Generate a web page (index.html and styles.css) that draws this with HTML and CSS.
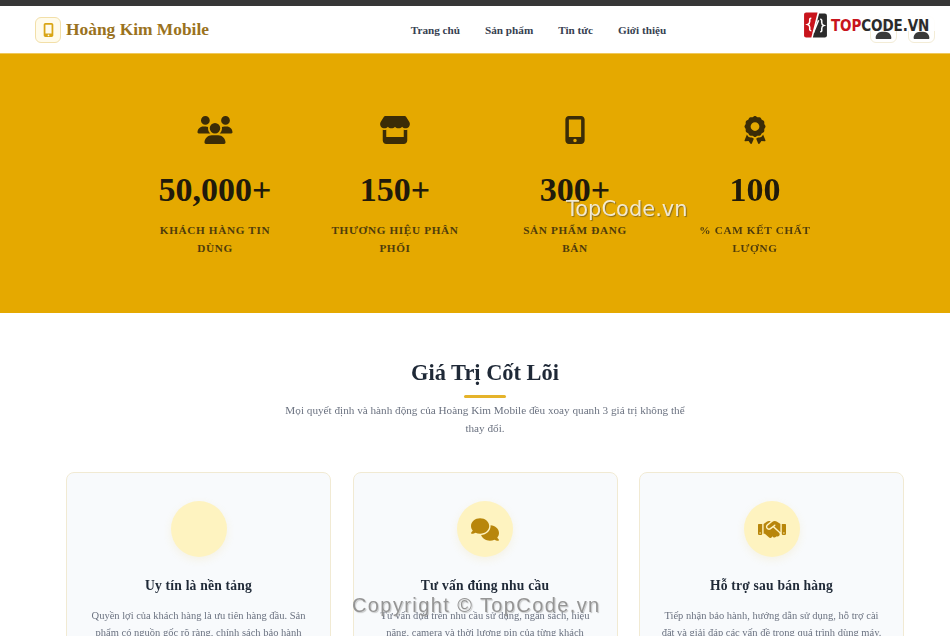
FILE: index.html
```html
<!DOCTYPE html>
<html lang="vi">
<head>
    <meta charset="UTF-8">
    <meta name="viewport" content="width=device-width, initial-scale=1.0">
    <title>Hoàng Kim Mobile</title>
    <link rel="stylesheet" href="styles.css">
</head>
<body>

<div class="page">
    <div class="top-bar"></div>

    <header class="site-header">
        <a class="brand" href="#">
            <span class="brand-icon">
                <svg viewBox="0 0 384 512"><path d="M80 0h224c35 0 64 29 64 64v384c0 35-29 64-64 64H80c-35 0-64-29-64-64V64C16 29 45 0 80 0zm0 64v320h224V64H80zm112 416a32 32 0 1 0 0-64 32 32 0 1 0 0 64z"/></svg>
            </span>
            Hoàng Kim Mobile
        </a>
        <nav class="main-nav">
            <a href="#">Trang chủ</a>
            <a href="#">Sản phẩm</a>
            <a href="#">Tin tức</a>
            <a href="#">Giới thiệu</a>
        </nav>
        <div class="header-actions">
            <button class="icon-button"><svg viewBox="0 0 448 512"><path d="M224 256a128 128 0 1 0 0-256 128 128 0 1 0 0 256zm-45 48C80 304 0 384 0 483c0 16 13 29 29 29h390c16 0 29-13 29-29 0-99-80-179-179-179h-90z"/></svg></button>
            <button class="icon-button"><svg viewBox="0 0 448 512"><path d="M224 256a128 128 0 1 0 0-256 128 128 0 1 0 0 256zm-45 48C80 304 0 384 0 483c0 16 13 29 29 29h390c16 0 29-13 29-29 0-99-80-179-179-179h-90z"/></svg></button>
        </div>
    </header>

    <section class="stats">
        <div class="stats-grid">
            <div class="stat">
                <svg class="stat-icon" viewBox="0 0 640 512"><path d="M144 0a80 80 0 1 1 0 160A80 80 0 1 1 144 0zM512 0a80 80 0 1 1 0 160A80 80 0 1 1 512 0zM0 298.7C0 239.8 47.8 192 106.7 192h42.7c15.9 0 31 3.5 44.6 9.7c-1.3 7.2-1.9 14.7-1.9 22.3c0 38.2 16.8 72.5 43.3 96c-.2 0-.4 0-.7 0H21.3C9.6 320 0 310.4 0 298.7zM405.3 320c-.2 0-.4 0-.7 0c26.6-23.5 43.3-57.8 43.3-96c0-7.6-.7-15-1.9-22.3c13.6-6.3 28.7-9.7 44.6-9.7h42.7C592.2 192 640 239.8 640 298.7c0 11.8-9.6 21.3-21.3 21.3H405.3zM224 224a96 96 0 1 1 192 0 96 96 0 1 1 -192 0zM128 485.3C128 411.7 187.7 352 261.3 352H378.7C452.3 352 512 411.7 512 485.3c0 14.7-11.9 26.7-26.7 26.7H154.7c-14.7 0-26.7-11.9-26.7-26.7z"/></svg>
                <div class="stat-number">50,000+</div>
                <div class="stat-label">Khách hàng tin dùng</div>
            </div>
            <div class="stat">
                <svg class="stat-icon" viewBox="0 0 576 512"><path d="M547.6 103.8L490.3 13.1C485.2 5 476.1 0 466.4 0H109.6C99.9 0 90.8 5 85.7 13.1L28.3 103.8c-29.6 46.8-3.4 111.9 51.9 119.4c4 .5 8.1 .8 12.1 .8c26.1 0 49.3-11.4 65.2-29c15.9 17.6 39.1 29 65.2 29c26.1 0 49.3-11.4 65.2-29c15.9 17.6 39.1 29 65.2 29c26.2 0 49.3-11.4 65.2-29c16 17.6 39.1 29 65.2 29c4.1 0 8.1-.3 12.1-.8c55.5-7.4 81.8-72.5 52.1-119.4zM499.7 254.9l-.1 0c-5.3 .7-10.7 1.1-16.2 1.1c-12.4 0-24.3-1.9-35.4-5.3V384H128V250.6c-11.2 3.5-23.2 5.4-35.6 5.4c-5.5 0-11-.4-16.3-1.1l-.1 0c-4.1-.6-8.1-1.3-12-2.3V384v64c0 35.3 28.7 64 64 64H448c35.3 0 64-28.7 64-64V384 252.6c-4 1-8 1.8-12.3 2.3z"/></svg>
                <div class="stat-number">150+</div>
                <div class="stat-label">Thương hiệu phân phối</div>
            </div>
            <div class="stat">
                <svg class="stat-icon" viewBox="0 0 384 512"><path d="M80 0h224c35 0 64 29 64 64v384c0 35-29 64-64 64H80c-35 0-64-29-64-64V64C16 29 45 0 80 0zm0 64v320h224V64H80zm112 416a32 32 0 1 0 0-64 32 32 0 1 0 0 64z"/></svg>
                <div class="stat-number">300+</div>
                <div class="stat-label">Sản phẩm đang bán</div>
            </div>
            <div class="stat">
                <svg class="stat-icon" viewBox="0 0 384 512"><path d="M173.8 5.5c11-7.3 25.4-7.3 36.4 0L228 17.2c6 3.9 13 5.8 20.1 5.4l21.3-1.3c13.2-.8 25.6 6.4 31.5 18.2l9.6 19.1c3.2 6.4 8.4 11.5 14.7 14.7L344.5 83c11.8 5.9 19 18.3 18.2 31.5l-1.3 21.3c-.4 7.1 1.5 14.2 5.4 20.1l11.8 17.8c7.3 11 7.3 25.4 0 36.4L366.8 228c-3.9 6-5.8 13-5.4 20.1l1.3 21.3c.8 13.2-6.4 25.6-18.2 31.5l-19.1 9.6c-6.4 3.2-11.5 8.4-14.7 14.7L301 344.5c-5.9 11.8-18.3 19-31.5 18.2l-21.3-1.3c-7.1-.4-14.2 1.5-20.1 5.4l-17.8 11.8c-11 7.3-25.4 7.3-36.4 0L156 366.8c-6-3.9-13-5.8-20.1-5.4l-21.3 1.3c-13.2 .8-25.6-6.4-31.5-18.2l-9.6-19.1c-3.2-6.4-8.4-11.5-14.7-14.7L39.5 301c-11.8-5.9-19-18.3-18.2-31.5l1.3-21.3c.4-7.1-1.5-14.2-5.4-20.1L5.5 210.2c-7.3-11-7.3-25.4 0-36.4L17.2 156c3.9-6 5.8-13 5.4-20.1l-1.3-21.3c-.8-13.2 6.4-25.6 18.2-31.5l19.1-9.6C65 70.2 70.2 65 73.4 58.6L83 39.5c5.9-11.8 18.3-19 31.5-18.2l21.3 1.3c7.1 .4 14.2-1.5 20.1-5.4L173.8 5.5zM272 192a80 80 0 1 0 -160 0 80 80 0 1 0 160 0zM1.3 441.8L44.4 339.3c.2 .1 .3 .2 .4 .4l9.6 19.1c11.7 23.2 36 37.3 62 35.8l21.3-1.3c.2 0 .5 0 .7 .2l17.8 11.8c5.1 3.3 10.5 5.9 16.1 7.7l-37.6 89.3c-2.3 5.5-7.4 9.2-13.3 9.7s-11.6-2.2-14.8-7.2L74.4 455.5l-56.1 8.3c-5.7 .8-11.4-1.5-15-6s-4.3-10.7-2.1-16zm248 60.4L211.7 413c5.6-1.8 11-4.3 16.1-7.7l17.8-11.8c.2-.1 .4-.2 .7-.2l21.3 1.3c26 1.5 50.3-12.6 62-35.8l9.6-19.1c.1-.2 .2-.3 .4-.4l43.2 102.5c2.2 5.3 1.4 11.4-2.1 16s-9.3 6.9-15 6l-56.1-8.3-32.2 49.2c-3.2 5-8.9 7.7-14.8 7.2s-11-4.3-13.3-9.7z"/></svg>
                <div class="stat-number">100</div>
                <div class="stat-label">% cam kết chất lượng</div>
            </div>
        </div>
    </section>

    <section class="values">
        <h2>Giá Trị Cốt Lõi</h2>
        <div class="title-line"></div>
        <p class="values-intro">Mọi quyết định và hành động của Hoàng Kim Mobile đều xoay quanh 3 giá trị không thể thay đổi.</p>

        <div class="value-cards">
            <div class="value-card">
                <div class="value-icon"></div>
                <h3>Uy tín là nền tảng</h3>
                <p>Quyền lợi của khách hàng là ưu tiên hàng đầu. Sản phẩm có nguồn gốc rõ ràng, chính sách bảo hành</p>
            </div>
            <div class="value-card">
                <div class="value-icon">
                    <svg viewBox="0 0 640 512"><path d="M208 352c114.9 0 208-78.8 208-176S322.9 0 208 0S0 78.8 0 176c0 38.6 14.7 74.3 39.6 103.4c-3.5 9.4-8.7 17.7-14.2 24.7c-4.8 6.2-9.7 11-13.3 14.3c-1.8 1.6-3.3 2.9-4.3 3.7c-.5 .4-.9 .7-1.1 .8l-.2 .2 0 0 0 0C1 327.2-1.4 334.4 .8 340.9S9.1 352 16 352c21.8 0 43.8-5.6 62.1-12.5c9.2-3.5 17.8-7.4 25.3-11.4C134.1 343.3 169.8 352 208 352zM448 176c0 112.3-99.1 196.9-216.5 207C255.8 457.4 336.4 512 432 512c38.2 0 73.9-8.7 104.7-23.9c7.5 4 16 7.9 25.2 11.4c18.3 6.9 40.3 12.5 62.1 12.5c6.9 0 13.1-4.5 15.2-11.1c2.1-6.6-.2-13.8-5.8-17.9l0 0 0 0-.2-.2c-.2-.2-.6-.4-1.1-.8c-1-.8-2.5-2-4.3-3.7c-3.6-3.3-8.5-8.1-13.3-14.3c-5.5-7-10.7-15.4-14.2-24.7c24.9-29 39.6-64.7 39.6-103.4c0-92.8-84.9-168.9-192.6-175.5c.4 5.1 .6 10.3 .6 15.5z"/></svg>
                </div>
                <h3>Tư vấn đúng nhu cầu</h3>
                <p>Tư vấn dựa trên nhu cầu sử dụng, ngân sách, hiệu năng, camera và thời lượng pin của từng khách</p>
            </div>
            <div class="value-card">
                <div class="value-icon">
                    <svg viewBox="0 0 640 512"><path d="M323.4 85.2l-96.8 78.4c-16.1 13-19.2 36.4-7 53.1c12.9 17.8 38 21.3 55.3 7.8l99.3-77.2c7-5.4 17-4.2 22.5 2.8s4.2 17-2.8 22.5l-20.9 16.2L512 316.8V128h-.7l-3.9-2.5L434.8 79c-15.3-9.8-33.2-15-51.4-15c-21.8 0-43 7.5-60 21.2zm22.8 124.4l-51.7 40.2C263 274.4 217.3 268 193.7 235.6c-22.2-30.5-16.6-73.1 12.7-96.8l83.2-67.3c-11.6-4.9-24.1-7.4-36.8-7.4C234 64 215.7 69.6 200 80l-72 48V352h28.2l91.4 83.4c19.6 17.9 49.9 16.5 67.8-3.1c5.5-6.1 9.2-13.2 11.1-20.6l17 15.6c19.5 17.9 49.9 16.6 67.8-2.9c4.5-4.9 7.8-10.6 9.9-16.5c19.4 13 45.8 10.3 62.1-7.5c17.9-19.5 16.6-49.9-2.9-67.8l-134.2-123zM16 128c-8.8 0-16 7.2-16 16V352c0 17.7 14.3 32 32 32H64c17.7 0 32-14.3 32-32V128H16zM48 320a16 16 0 1 1 0 32 16 16 0 1 1 0-32zM544 128V352c0 17.7 14.3 32 32 32h32c17.7 0 32-14.3 32-32V144c0-8.8-7.2-16-16-16H544zm32 208a16 16 0 1 1 32 0 16 16 0 1 1 -32 0z"/></svg>
                </div>
                <h3>Hỗ trợ sau bán hàng</h3>
                <p>Tiếp nhận bảo hành, hướng dẫn sử dụng, hỗ trợ cài đặt và giải đáp các vấn đề trong quá trình dùng máy.</p>
            </div>
        </div>
    </section>

    <!-- watermarks on top of the page -->
    <div class="wm-logo">
        <svg class="wm-mark" viewBox="0 0 50 50">
            <path fill="#c8141c" d="M6 1h22L16 49H6a4 4 0 0 1-4-4V5a4 4 0 0 1 4-4z"/>
            <path fill="#2b2b2b" d="M31 3h11a4 4 0 0 1 4 4v38a4 4 0 0 1-4 4H19z"/>
            <path fill="none" stroke="#fff" stroke-width="3" d="M16 12c-4 0-3 3-3 6s-1 5-4 6c3 1 4 3 4 6s-1 6 3 6M33 14c4 0 3 3 3 6s1 5 4 6c-3 1-4 3-4 6s1 6-3 6M30 16L20 40"/>
        </svg>
        <span class="wm-top">TOP</span><span class="wm-code">CODE.VN</span>
    </div>
    <div class="wm-hero">TopCode.vn</div>
    <div class="wm-copyright">Copyright © TopCode.vn</div>
</div>

</body>
</html>
```

FILE: styles.css
```css
html, body {
    margin: 0;
    padding: 0;
    overflow: hidden;
    height: 636px;
}

body {
    font-family: "Liberation Serif", serif;
    background: #fff;
}

.page {
    position: relative;
    width: 970px;
    filter: blur(0.3px);
}

.top-bar {
    height: 6px;
    background: #373737;
}

/* header */
.site-header {
    height: 47px;
    padding: 0 35px;
    display: flex;
    align-items: center;
    justify-content: space-between;
    background: #fff;
    border-bottom: 1px solid #f0c85a;
}

.brand {
    display: flex;
    align-items: center;
    gap: 5px;
    font-size: 17.4px;
    font-weight: bold;
    color: #9a7220;
    text-decoration: none;
}

.brand-icon {
    width: 24px;
    height: 24px;
    border: 1px solid #f2dfa8;
    border-radius: 6px;
    background: #fffbeb;
    display: flex;
    align-items: center;
    justify-content: center;
}

.brand-icon svg {
    width: 11px;
    height: 14px;
    fill: #d9a514;
}

.main-nav {
    display: flex;
    gap: 25px;
    margin-right: 2px;
}

.main-nav a {
    font-size: 11.2px;
    font-weight: bold;
    color: #374151;
    text-decoration: none;
}

.header-actions {
    display: flex;
    gap: 11px;
}

.icon-button {
    width: 27px;
    height: 27px;
    padding: 0;
    border: 1px solid #f3ecd6;
    border-radius: 6px;
    background: #fff;
    display: flex;
    align-items: center;
    justify-content: center;
}

.icon-button svg {
    width: 17px;
    height: 18px;
    fill: #3a3a3a;
}

/* stats band */
.stats {
    height: 259px;
    background: #e5a900;
    display: flex;
    justify-content: center;
    padding-top: 62px;
    box-sizing: border-box;
}

.stats-grid {
    display: grid;
    grid-template-columns: repeat(4, 132px);
    gap: 48px;
    align-items: start;
}

.stat {
    text-align: center;
}

.stat-icon {
    display: block;
    height: 28px;
    width: 36px;
    margin: 0 auto 27px;
    fill: #3b2c07;
}

.stat-number {
    font-size: 34px;
    font-weight: bold;
    line-height: 38px;
    color: #201a0b;
    margin-bottom: 12px;
}

.stat-label {
    font-size: 11.2px;
    font-weight: bold;
    line-height: 18px;
    letter-spacing: 0.66px;
    text-transform: uppercase;
    color: #4f3c0c;
}

/* core values */
.values {
    padding: 45px 66px 0;
    text-align: center;
}

.values h2 {
    margin: 0;
    font-size: 22.4px;
    line-height: 30px;
    font-weight: bold;
    color: #1f2937;
}

.title-line {
    width: 42px;
    height: 3px;
    margin: 7px auto 3px;
    border-radius: 2px;
    background: #e5b32a;
}

.values-intro {
    width: 410px;
    margin: 0 auto 35px;
    font-size: 11.2px;
    line-height: 18px;
    color: #6b7280;
}

.value-cards {
    display: grid;
    grid-template-columns: repeat(3, 265px);
    gap: 21px;
    justify-content: space-between;
}

.value-card {
    box-sizing: border-box;
    height: 190px;
    padding: 28px 20px 0;
    background: #f8fafc;
    border: 1px solid #f1ead3;
    border-radius: 8px;
}

.value-icon {
    width: 56px;
    height: 56px;
    margin: 0 auto 20px;
    border-radius: 50%;
    background: #fef3c0;
    box-shadow: 0 3px 8px rgba(230, 190, 60, 0.12);
    display: flex;
    align-items: center;
    justify-content: center;
}

.value-icon svg {
    width: 28px;
    height: 23px;
    fill: #b8860b;
}

.value-card h3 {
    margin: 0 0 12px;
    font-size: 13.6px;
    line-height: 18px;
    font-weight: bold;
    letter-spacing: 0.2px;
    color: #1f2937;
}

.value-card p {
    margin: 0;
    font-size: 10.5px;
    line-height: 17px;
    color: #6b7280;
}

/* watermarks */
.wm-logo {
    position: absolute;
    left: 803px;
    top: 12px;
    z-index: 0;
    height: 26px;
    display: flex;
    align-items: center;
    font-family: "DejaVu Sans", sans-serif;
    font-stretch: condensed;
    font-weight: bold;
    font-size: 15px;
    letter-spacing: -0.1px;
    line-height: 26px;
}

/* the logo hides the top of the header buttons */
.wm-logo::before {
    content: "";
    position: absolute;
    left: 28px;
    top: 0;
    width: 106px;
    height: 19px;
    z-index: -1;
    background: rgba(255, 255, 255, 0.9);
}

.wm-mark {
    width: 26px;
    height: 26px;
    margin-right: 2px;
}

.wm-top,
.wm-code {
    margin-top: 1px;
}

.wm-top {
    color: #c8141c;
}

.wm-code {
    color: #2b2b2b;
}

.wm-hero {
    position: absolute;
    left: 566px;
    top: 197px;
    font-family: "DejaVu Sans", sans-serif;
    font-size: 21px;
    line-height: 24px;
    color: rgba(255, 255, 255, 0.8);
    text-shadow: 1px 1px 1px rgba(80, 70, 40, 0.6);
}

.wm-copyright {
    position: absolute;
    left: 352px;
    top: 593px;
    font-family: "Liberation Sans", sans-serif;
    font-size: 20px;
    line-height: 24px;
    letter-spacing: 1.4px;
    color: rgba(125, 125, 125, 0.8);
    text-shadow: 0 0 2px #fff, 1px 1px 1px rgba(0, 0, 0, 0.25);
}
```
